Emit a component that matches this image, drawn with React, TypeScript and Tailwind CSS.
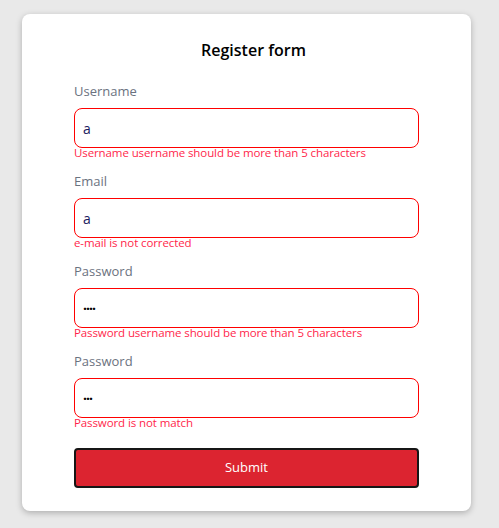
import React from "react";

const fields = [
  { label: "Username", value: "a", type: "text", error: "Username username should be more than 5 characters" },
  { label: "Email", value: "a", type: "text", error: "e-mail is not corrected" },
  { label: "Password", value: "····", type: "pw", error: "Password username should be more than 5 characters" },
  { label: "Password", value: "···", type: "pw", error: "Password is not match" },
];

export default function App() {
  return (
    <div
      className="min-h-[528px] bg-[#e9e9e9] pt-[14px] pl-[22px]"
      style={{ fontFamily: '"Open Sans", "Noto Sans", sans-serif' }}
    >
      <div className="w-[449px] bg-white rounded-lg shadow-[0_2px_6px_rgba(0,0,0,0.25)] px-[52px] pt-[24px] pb-[23px]">
        <h1 className="text-center pl-[14px] text-[16px] h-[24px] leading-[24px] font-semibold text-black mb-[19px] tracking-[0px]">
          Register form
        </h1>
        {fields.map((f, i) => (
          <div key={i} className="h-[90px]">
            <div className="text-[13px] h-[20px] leading-[20px] text-[#6b7280]">{f.label}</div>
            <div className="mt-[7px] h-[40px] border border-[#ff0000] rounded-lg flex items-center px-[8px]">
              <span
                className={
                  f.type === "pw"
                    ? "text-[14px] text-black font-bold tracking-[-1px]"
                    : "text-[14px] text-[#1a1a5e]"
                }
              >
                {f.value}
              </span>
            </div>
            <div className="text-[11.5px] h-[12px] leading-[9px] text-[#ff1f4b] tracking-[-0.1px]">{f.error}</div>
          </div>
        ))}
        <button className="mt-[7px] w-full h-[40px] bg-[#dc2430] border-2 border-[#161616] rounded-[4px] text-white text-[13px]">
          Submit
        </button>
      </div>
    </div>
  );
}
